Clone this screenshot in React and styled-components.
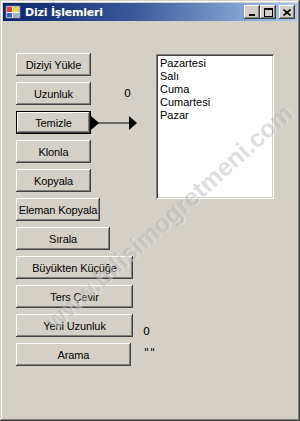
import React from "react";
import styled, { createGlobalStyle, css } from "styled-components";

const Global = createGlobalStyle`
  html, body { margin: 0; padding: 0; background: #D4D0C8; }
  body { width: 300px; height: 421px; overflow: hidden; font-family: "Liberation Sans", Arial, sans-serif; }
`;

const Window = styled.div`
  position: relative;
  width: 300px;
  height: 421px;
  box-sizing: border-box;
  background: #D4D0C8;
  padding: 3px;
  display: flex;
  flex-direction: column;
  overflow: hidden;
  box-shadow: inset -1px -1px #404040, inset 1px 1px #D4D0C8,
    inset -2px -2px #808080, inset 2px 2px #FFFFFF;
`;

const TitleBar = styled.div`
  height: 18px;
  display: flex;
  align-items: center;
  background: linear-gradient(to right, #0A246A 0%, #3A5A9A 45%, #A6CAF0 100%);
  padding: 0 2px 0 2px;
  flex-shrink: 0;
`;

const TitleText = styled.span`
  flex: 1;
  margin-left: 4px;
  color: #fff;
  font-family: "DejaVu Sans", "Liberation Sans", sans-serif;
  font-weight: bold;
  font-size: 11px;
  letter-spacing: -0.2px;
`;

const CapGroup = styled.div`
  display: flex;
  align-items: center;
`;

const CapButton = styled.div`
  width: 16px;
  height: 14px;
  box-sizing: border-box;
  background: #D4D0C8;
  display: flex;
  align-items: center;
  justify-content: center;
  margin-left: ${(p) => (p.$gap ? "3px" : "0")};
  box-shadow: inset -1px -1px #404040, inset 1px 1px #FFFFFF,
    inset -2px -2px #808080, inset 2px 2px #D4D0C8;
`;

const Client = styled.div`
  position: relative;
  flex: 1;
  display: grid;
  grid-template-columns: 140px 118px;
  padding: 32px 0 0 13px;
  align-items: start;
`;

const ButtonColumn = styled.div`
  display: flex;
  flex-direction: column;
  gap: 6px;
`;

const Row = styled.div`
  display: flex;
  align-items: ${(p) => p.$align || "center"};
  height: 23px;
`;

const WinButton = styled.button`
  width: ${(p) => p.$w}px;
  height: 23px;
  box-sizing: border-box;
  padding: 0;
  margin: 0;
  border: none;
  background: #D4D0C8;
  font-family: "Liberation Sans", Arial, sans-serif;
  font-size: 11px;
  color: #000;
  letter-spacing: -0.1px;
  box-shadow: inset -1px -1px #404040, inset 1px 1px #FFFFFF,
    inset -2px -2px #808080, inset 2px 2px #D4D0C8;
  ${(p) =>
    p.$default &&
    css`
      box-shadow: inset 0 0 0 1px #000, inset -2px -2px #404040,
        inset 2px 2px #FFFFFF, inset -3px -3px #808080;
    `}
`;

const ValueLabel = styled.span`
  font-family: "DejaVu Sans", "Liberation Sans", Arial, sans-serif;
  font-size: 11px;
  line-height: 13px;
  color: #000;
  letter-spacing: ${(p) => p.$ls || 0}px;
  margin-left: ${(p) => p.$ml}px;
  margin-top: ${(p) => p.$mt || 0}px;
`;

const ListBox = styled.div`
  margin-top: 1px;
  width: 118px;
  height: 145px;
  box-sizing: border-box;
  background: #fff;
  padding: 3px 3px;
  box-shadow: inset 1px 1px #808080, inset -1px -1px #FFFFFF,
    inset 2px 2px #404040, inset -2px -2px #D4D0C8;
  display: flex;
  flex-direction: column;
`;

const ListItem = styled.div`
  font-family: "Liberation Sans", Arial, sans-serif;
  font-size: 11px;
  line-height: 13px;
  color: #000;
  padding-left: 1px;
`;

const Watermark = styled.div`
  position: absolute;
  left: 166px;
  top: 196px;
  transform: translate(-50%, -50%) rotate(-42deg);
  white-space: nowrap;
  font-family: "Liberation Sans", Arial, sans-serif;
  font-size: 25px;
  font-weight: bold;
  color: rgba(140, 140, 140, 0.3);
  text-shadow: 1px 1px 0 rgba(255, 255, 255, 0.35);
  pointer-events: none;
`;

const AppIcon = () => (
  <svg width="16" height="16" viewBox="0 0 16 16">
    <rect x="1" y="2" width="14" height="12" fill="#fff" stroke="#5a6a8a" />
    <rect x="2" y="3" width="5" height="5" fill="#e04030" />
    <rect x="8" y="3" width="6" height="5" fill="#f0d040" />
    <rect x="2" y="9" width="5" height="4" fill="#3060c0" />
    <rect x="8" y="9" width="6" height="4" fill="#a0b0d0" />
  </svg>
);

const Arrow = () => (
  <svg width="48" height="18" viewBox="0 0 48 18">
    <polygon points="0,2 8,9 0,16" fill="#000" />
    <line x1="7" y1="9" x2="40" y2="9" stroke="#000" strokeWidth="1" />
    <polygon points="38,2 46,9 38,16" fill="#000" />
  </svg>
);

const buttons = [
  { t: "Diziyi Yükle", w: 75 },
  { t: "Uzunluk", w: 75, label: "0", ml: 33 },
  { t: "Temizle", w: 75, def: true, arrow: true },
  { t: "Klonla", w: 75 },
  { t: "Kopyala", w: 75 },
  { t: "Eleman Kopyala", w: 84 },
  { t: "Sırala", w: 94 },
  { t: "Büyükten Küçüğe", w: 117 },
  { t: "Ters Çevir", w: 117 },
  { t: "Yeni Uzunluk", w: 117, label: "0", ml: 10, mt: 11, align: "flex-start" },
  { t: "Arama", w: 117, label: "\"\"", ml: 13, mt: 3, ls: 1, align: "flex-start" },
];

export default function App() {
  return (
    <>
      <Global />
      <Window>
        <TitleBar>
          <AppIcon />
          <TitleText>Dizi İşlemleri</TitleText>
          <CapGroup>
            <CapButton>
              <svg width="8" height="8" viewBox="0 0 8 8">
                <rect x="1" y="6" width="6" height="2" fill="#000" />
              </svg>
            </CapButton>
            <CapButton>
              <svg width="9" height="9" viewBox="0 0 9 9">
                <rect x="0.5" y="0.5" width="8" height="8" fill="none" stroke="#000" />
                <rect x="0" y="0" width="9" height="2" fill="#000" />
              </svg>
            </CapButton>
            <CapButton $gap>
              <svg width="8" height="7" viewBox="0 0 8 7">
                <path d="M0.5 0.5 L7.5 6.5 M7.5 0.5 L0.5 6.5" stroke="#000" strokeWidth="1.6" />
              </svg>
            </CapButton>
          </CapGroup>
        </TitleBar>
        <Client>
          <ButtonColumn>
            {buttons.map((b) => (
              <Row key={b.t} $align={b.align}>
                <WinButton $w={b.w} $default={b.def}>
                  {b.t}
                </WinButton>
                {b.label && (
                  <ValueLabel $ml={b.ml} $mt={b.mt} $ls={b.ls}>
                    {b.label}
                  </ValueLabel>
                )}
                {b.arrow && <Arrow />}
              </Row>
            ))}
          </ButtonColumn>
          <ListBox>
            {["Pazartesi", "Salı", "Cuma", "Cumartesi", "Pazar"].map((d) => (
              <ListItem key={d}>{d}</ListItem>
            ))}
          </ListBox>
          <Watermark>www.bilisimogretmeni.com</Watermark>
        </Client>
      </Window>
    </>
  );
}
